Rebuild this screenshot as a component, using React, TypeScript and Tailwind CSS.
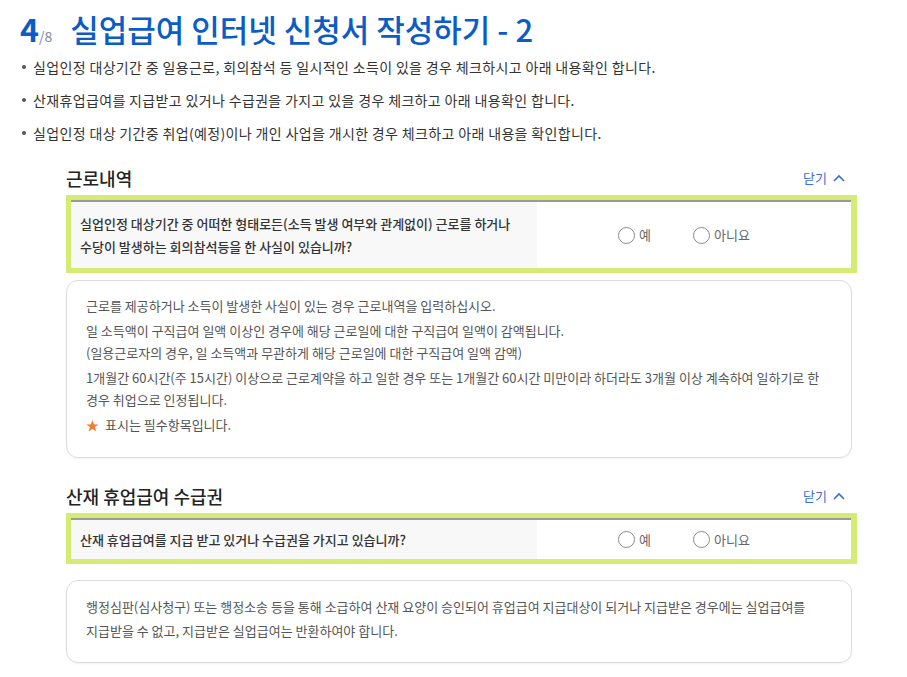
import React from 'react';

const FONT = "font-['Noto_Sans_CJK_KR','Noto_Sans',sans-serif]";

const notices = [
  '실업인정 대상기간 중 일용근로, 회의참석 등 일시적인 소득이 있을 경우 체크하시고 아래 내용확인 합니다.',
  '산재휴업급여를 지급받고 있거나 수급권을 가지고 있을 경우 체크하고 아래 내용확인 합니다.',
  '실업인정 대상 기간중 취업(예정)이나 개인 사업을 개시한 경우 체크하고 아래 내용을 확인합니다.',
];

function ChevronUp() {
  return (
    <svg width="12" height="8" viewBox="0 0 12 8" fill="none" className="ml-[6px]">
      <path d="M1 7L6 2L11 7" stroke="#3b6fd1" strokeWidth="1.6" />
    </svg>
  );
}

function SectionHeader({ title }: { title: string }) {
  return (
    <div className="flex items-center justify-between pr-[12px] mb-[4px]">
      <h3 className="text-[18px] leading-[26px] text-[#222] font-medium">{title}</h3>
      <button className="flex items-center text-[13px] text-[#3b6fd1]">
        닫기
        <ChevronUp />
      </button>
    </div>
  );
}

function Radio({ label }: { label: string }) {
  return (
    <label className="flex items-center">
      <span className="w-[17px] h-[17px] rounded-full border border-[#8a8a8a] bg-white" />
      <span className="ml-[4px] text-[13px] text-[#666]">{label}</span>
    </label>
  );
}

function QuestionBox({ lines, pad }: { lines: string[]; pad: string }) {
  return (
    <div className="border-[5px] border-[#d6eb74] border-r-[6px]">
      <div className="flex border-t-2 border-[#9a9a9a]">
        <div className={`w-[466px] bg-[#f8f8f8] pl-[9px] ${pad} text-[13px] leading-[23px] text-[#333] font-medium`}>
          {lines.map((l) => (
            <p key={l}>{l}</p>
          ))}
        </div>
        <div className="flex-1 flex items-center pl-[81px] gap-[42px]">
          <Radio label="예" />
          <Radio label="아니요" />
        </div>
      </div>
    </div>
  );
}

export default function App() {
  return (
    <div className={`${FONT} bg-white w-[907px] min-h-[677px] pl-[20px] pt-[8px]`}>
      {/* page title */}
      <h1 className="flex items-baseline text-[#0b5cc7]">
        <span className="text-[32px] font-bold leading-[40px]">4</span>
        <span className="text-[14px] text-[#7a8aa8] mr-[18px]">/8</span>
        <span className="text-[31px] font-medium leading-[40px]">실업급여 인터넷 신청서 작성하기 - 2</span>
      </h1>

      <ul className="mt-[2px] text-[14px] tracking-[0.35px] text-[#333]">
        {notices.map((n) => (
          <li key={n} className="flex items-center h-[34px] -mt-[1px]">
            <span className="w-[4px] h-[4px] rounded-full bg-[#555] ml-[2px] mr-[7px]" />
            {n}
          </li>
        ))}
      </ul>

      <div className="ml-[46px] w-[791px] mt-[15px]">
        <SectionHeader title="근로내역" />
        <QuestionBox
          pad="py-[10px]"
          lines={[
            '실업인정 대상기간 중 어떠한 형태로든(소득 발생 여부와 관계없이) 근로를 하거나',
            '수당이 발생하는 회의참석등을 한 사실이 있습니까?',
          ]}
        />
        <div className="mt-[7px] mr-[5px] rounded-[12px] border border-[#dcdcdc] px-[19px] pt-[14px] pb-[21px] text-[13px] leading-[22px] text-[#555] shadow-[0_1px_2px_rgba(0,0,0,0.05)]">
          <p>근로를 제공하거나 소득이 발생한 사실이 있는 경우 근로내역을 입력하십시오.</p>
          <p className="mt-[3px]">일 소득액이 구직급여 일액 이상인 경우에 해당 근로일에 대한 구직급여 일액이 감액됩니다.</p>
          <p>(일용근로자의 경우, 일 소득액과 무관하게 해당 근로일에 대한 구직급여 일액 감액)</p>
          <p className="mt-[3px]">
            1개월간 60시간(주 15시간) 이상으로 근로계약을 하고 일한 경우 또는 1개월간 60시간 미만이라 하더라도 3개월 이상 계속하여 일하기로 한
            경우 취업으로 인정됩니다.
          </p>
          <p className="mt-[3px]">
            <span className="text-[#f07d2a] mr-[6px]">★</span>표시는 필수항목입니다.
          </p>
        </div>

        <div className="mt-[25px]">
          <SectionHeader title="산재 휴업급여 수급권" />
          <QuestionBox pad="py-[8px]" lines={['산재 휴업급여를 지급 받고 있거나 수급권을 가지고 있습니까?']} />
          <div className="mt-[16px] mr-[5px] rounded-[12px] border border-[#dcdcdc] px-[19px] pt-[14px] pb-[19px] text-[13px] leading-[24px] text-[#555] shadow-[0_1px_2px_rgba(0,0,0,0.05)]">
            <p>
              행정심판(심사청구) 또는 행정소송 등을 통해 소급하여 산재 요양이 승인되어 휴업급여 지급대상이 되거나 지급받은 경우에는 실업급여를
              <br />
              지급받을 수 없고, 지급받은 실업급여는 반환하여야 합니다.
            </p>
          </div>
        </div>
      </div>
    </div>
  );
}
